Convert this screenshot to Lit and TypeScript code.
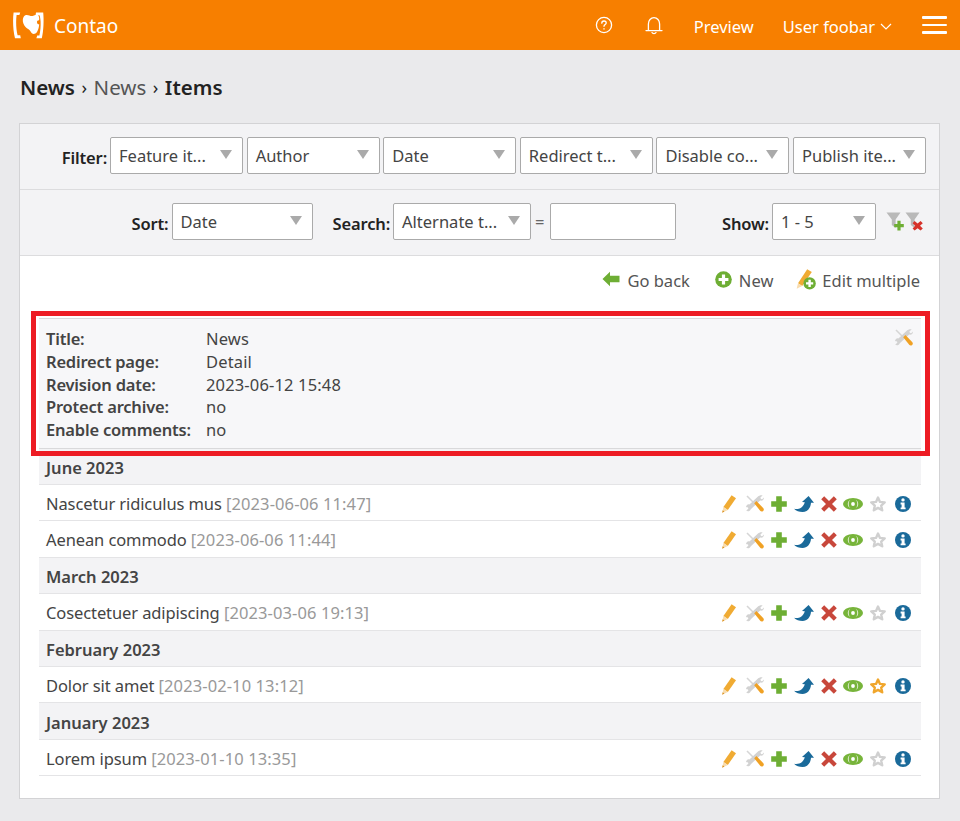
import { LitElement, html, css, svg } from 'lit';
import { customElement } from 'lit/decorators.js';

const ico = (w: number, h: number, body: unknown) =>
  html`<svg class="ico" width=${w} height=${h} viewBox="0 0 ${w} ${h}">${body}</svg>`;

const pencil = () => ico(14, 18, svg`
  <path d="M9.6 0.2 L14 3.2 L5.8 15 L1.4 12 Z" fill="#f0ab33"/>
  <path d="M1.4 12 L5.8 15 L0.2 17.8 Z" fill="#f8dcae"/>
  <path d="M0.7 15.2 L2.4 16.6 L0.2 17.8 Z" fill="#d98f1c"/>`);

const tools = () => ico(18, 17, svg`
  <path d="M1 1 L9 9" stroke="#d6d6d6" stroke-width="1.6" fill="none"/>
  <path d="M16.6 0.4 L14.4 2.6 L15 4 L16.2 4.2 L17.9 2.4 C18.1 4.6 16.4 6.2 14.2 5.6 L4.8 14.2 C4.2 16 2.2 16.8 0.2 15.8 L2.4 13.6 L2 12.4 L0.6 12 L0 12.4 C0 10.4 1.6 8.8 3.4 9.4 L12 1.6 C13 0.4 15 -0.2 16.6 0.4 Z" fill="#d2d2d2"/>
  <path d="M8.2 8.2 L10.4 6 L17.4 13.2 C18.1 14.4 17.8 15.6 16.9 16.2 C15.9 16.8 14.9 16.6 14.2 15.8 Z" fill="#f0a124"/>`);

const plus = () => ico(16, 16, svg`
  <path d="M5.2 0.2 H10.8 V5.2 H15.8 V10.8 H10.8 V15.8 H5.2 V10.8 H0.2 V5.2 H5.2 Z" fill="#6eae34"/>`);

const share = () => ico(20, 16, svg`
  <path d="M0 12.8 C5 13.6 9 11.8 10.8 6.2 L8 6 L14.6 0 L20 6.8 L17 6.8 C16.6 12.4 13.2 16 8.6 16 C5.2 16 2.2 15 0 12.8 Z" fill="#1a6a9a"/>`);

const del = () => ico(16, 16, svg`
  <path d="M3.2 0.2 L8 5 L12.8 0.2 L15.8 3.2 L11 8 L15.8 12.8 L12.8 15.8 L8 11 L3.2 15.8 L0.2 12.8 L5 8 L0.2 3.2 Z" fill="#c8473b"/>`);

const eye = () => ico(20, 12, svg`
  <ellipse cx="10" cy="6" rx="10" ry="6" fill="#77b43a"/>
  <path d="M4.8 6 C4.8 3.8 6.2 2.4 7.6 1.8 C6 2.8 5.6 4.4 5.6 6 C5.6 7.6 6 9.2 7.6 10.2 C6.2 9.6 4.8 8.2 4.8 6 Z M15.2 6 C15.2 3.8 13.8 2.4 12.4 1.8 C14 2.8 14.4 4.4 14.4 6 C14.4 7.6 14 9.2 12.4 10.2 C13.8 9.6 15.2 8.2 15.2 6 Z" fill="#fff"/>
  <circle cx="10" cy="6" r="1.9" fill="#fff"/>`);

const star = (color: string) => ico(16, 16, svg`
  <path d="M8 1.6 L10 5.9 L14.7 6.4 L11.2 9.6 L12.2 14.3 L8 11.9 L3.8 14.3 L4.8 9.6 L1.3 6.4 L6 5.9 Z" fill="#fff" stroke=${color} stroke-width="2.4" stroke-linejoin="round"/>`);

const info = () => ico(16, 16, svg`
  <circle cx="8" cy="8" r="8" fill="#1a6a9a"/>
  <circle cx="8" cy="3.9" r="1.7" fill="#fff"/>
  <path d="M5.6 6.6 H9.6 V11.4 H10.6 V13.2 H5.6 V11.4 H6.6 V8.4 H5.6 Z" fill="#fff"/>`);

const back = () => ico(18, 16, svg`
  <path d="M0.5 8 L8 0.8 V4.8 H17.5 V11.2 H8 V15.2 Z" fill="#6eae34"/>`);

const newIcon = () => ico(17, 17, svg`
  <circle cx="8.5" cy="8.5" r="8.3" fill="#6eae34"/>
  <path d="M6.9 3.6 H10.1 V6.9 H13.4 V10.1 H10.1 V13.4 H6.9 V10.1 H3.6 V6.9 H6.9 Z" fill="#fff"/>`);

const editAll = () => ico(20, 21, svg`
  <path d="M11.2 0.2 L15.8 3 L6.2 17 L2 14.2 Z" fill="#f0ab33"/>
  <path d="M2 14.2 L6.2 17 L0.6 19.8 Z" fill="#f8dcae"/>
  <circle cx="13.6" cy="14.4" r="6.2" fill="#6eae34"/>
  <path d="M12.4 10.8 H14.8 V13.2 H17.2 V15.6 H14.8 V18 H12.4 V15.6 H10 V13.2 H12.4 Z" fill="#fff"/>`);

const filterNew = () => ico(19, 19, svg`
  <path d="M0.5 0.5 H14.5 L9.6 7.5 V16 L5.8 13 V7.5 Z" fill="#b9b9b9"/>
  <path d="M11.4 8.8 H14.6 V12 H17.8 V15.2 H14.6 V18.4 H11.4 V15.2 H8.2 V12 H11.4 Z" fill="#6eae34"/>`);

const filterDel = () => ico(19, 19, svg`
  <path d="M0.5 0.5 H14.5 L9.6 7.5 V16 L5.8 13 V7.5 Z" fill="#b9b9b9"/>
  <path d="M9.6 9 L12.6 11.4 L15.6 9 L17.8 11.2 L15 13.8 L17.8 16.4 L15.6 18.6 L12.6 16.2 L9.6 18.6 L7.6 16.4 L10.2 13.8 L7.6 11.2 Z" fill="#d6322a"/>`);

const logo = () => html`<svg class="ico" width="31" height="27" viewBox="0 0 31 27" fill="#fff">
  <path d="M0.6 0.4 H7.2 L6.4 3 H3.6 C2.8 8.6 3 17.8 4.6 23.2 H7.2 L7.8 26.2 H2 C0 19 -0.4 7.6 0.6 0.4 Z"/>
  <path d="M23 0.4 H30.2 C31 8 30.6 18.6 28.8 26.2 H23.4 L24.2 23.4 H26.4 C27.4 19 27.8 14 27.6 9.6 C27.4 6.6 27 4.4 26.4 3.2 H22.6 Z"/>
  <path d="M13 3 C15.4 2.6 17.4 4.4 19.6 4 C21.6 3.6 23 2.6 24.8 2.6 C26.2 4.4 26.6 7 26 8.4 C24.8 8.2 24 9 24 10.2 C24 11.6 25 12.4 26.2 12.2 C26 15.6 24.6 20.4 22.4 21.6 C20.2 22.6 18.6 21.6 17.6 19.6 C16.6 17.4 14.6 16.8 13 15.4 C10.8 13.4 9.6 10.6 9.8 7.8 C10 5 11.4 3.4 13 3 Z"/>
</svg>`;

const help = () => html`<svg class="ico" width="18" height="18" viewBox="0 0 18 18" fill="none" stroke="#fff" stroke-width="1.3" stroke-linecap="round">
  <circle cx="9" cy="9" r="7.6"/>
  <path d="M6.8 7.2 C6.8 5.8 7.8 5 9 5 C10.3 5 11.2 5.9 11.2 7 C11.2 8.5 9 8.7 9 10.3"/>
  <path d="M9 12.7 V13"/>
</svg>`;

const bell = () => html`<svg class="ico" width="18" height="19" viewBox="0 0 18 19" fill="none" stroke="#fff" stroke-width="1.3" stroke-linecap="round">
  <path d="M1 14.6 H17"/>
  <path d="M3.4 14.4 V8 C3.4 4.4 5.8 1.6 9 1.6 C12.2 1.6 14.6 4.4 14.6 8 V14.4"/>
  <path d="M7 16.6 C7.6 18 10.4 18 11 16.6"/>
</svg>`;

const chevron = () => html`<svg class="ico" width="12" height="7" viewBox="0 0 12 7" fill="none" stroke="#fff" stroke-width="1.2"><path d="M1 1 L6 6 L11 1"/></svg>`;

const filters = ['Feature it...', 'Author', 'Date', 'Redirect t...', 'Disable co...', 'Publish ite...'];

const groups = [
  { title: 'June 2023', rows: [
    { name: 'Nascetur ridiculus mus', date: '2023-06-06 11:47', featured: false },
    { name: 'Aenean commodo', date: '2023-06-06 11:44', featured: false },
  ] },
  { title: 'March 2023', rows: [{ name: 'Cosectetuer adipiscing', date: '2023-03-06 19:13', featured: false }] },
  { title: 'February 2023', rows: [{ name: 'Dolor sit amet', date: '2023-02-10 13:12', featured: true }] },
  { title: 'January 2023', rows: [{ name: 'Lorem ipsum', date: '2023-01-10 13:35', featured: false }] },
];

const archive = [
  ['Title:', 'News'],
  ['Redirect page:', 'Detail'],
  ['Revision date:', '2023-06-12 15:48'],
  ['Protect archive:', 'no'],
  ['Enable comments:', 'no'],
];

@customElement('app-root')
export class AppRoot extends LitElement {
  static styles = css`
    :host {
      display: block;
      min-height: 821px;
      background: #eaeaec;
      color: #444;
      font-family: "Noto Sans", "Open Sans", sans-serif;
      font-size: 16.5px;
    }
    .ico { display: block; flex: none; }

    header {
      height: 50px;
      background: #f77f00;
      color: #fff;
      display: flex;
      align-items: center;
      padding: 0 13px 0 13px;
    }
    .brand { display: flex; align-items: center; gap: 10px; font-size: 19px; flex: 1; }
    .brand span, .txt { padding-top: 2px; }
    nav { display: flex; align-items: center; font-size: 16.5px; }
    .help { margin-right: 32px; }
    .bell { margin-right: 31px; }
    .user { display: flex; align-items: center; gap: 5px; margin: 0 30px 0 29px; }
    .burger { width: 25px; display: grid; gap: 5px; }
    .burger i { display: block; height: 2.5px; background: #fff; border-radius: 1px; }

    h1 {
      margin: 0;
      height: 73px;
      padding-left: 20px;
      display: flex;
      align-items: center;
      gap: 6.5px;
      font-size: 20.5px;
      font-weight: 600;
      color: #222;
    }
    h1 .sep { font-weight: 400; font-size: 18px; }
    h1 .mid { font-weight: 400; color: #555; }

    .panel {
      margin: 0 20px 0 19px;
      height: 676px;
      box-sizing: border-box;
      background: #fff;
      border: 1px solid #d3d3d5;
    }
    .bar {
      height: 66px;
      box-sizing: border-box;
      background: #f3f3f5;
      border-bottom: 1px solid #dcdcde;
      display: flex;
      align-items: center;
      justify-content: flex-end;
      padding: 0 15px 2px 0;
      color: #222;
    }
    .bar label { font-weight: 600; margin-right: 3px; padding-top: 3px; letter-spacing: -0.15px; }
    .filter { padding-right: 13px; }
    .filter .sel { width: 133px; margin-right: 3.6px; }
    .filter .sel:last-child { margin-right: 0; }
    .sel {
      height: 37px;
      box-sizing: border-box;
      background: #fff;
      border: 1px solid #aaa;
      border-radius: 2px;
      display: flex;
      align-items: center;
      justify-content: space-between;
      padding: 0 10px 0 8px;
      color: #444;
      flex: none;
    }
    .sel::after {
      content: "";
      margin-top: -3px;
      border: 6px solid transparent;
      border-top: 9px solid #aaa;
      border-bottom: 0;
    }
    .sort { width: 141px; margin-right: 20px; }
    .search { width: 138px; }
    .eq { margin: 0 4px; width: 11px; color: #666; }
    .input {
      width: 126px;
      height: 37px;
      box-sizing: border-box;
      background: #fff;
      border: 1px solid #aaa;
      border-radius: 2px;
      margin-right: 46px;
    }
    .show { width: 104px; margin-right: 10px; }
    .flt { display: flex; }

    .actions {
      height: 55px;
      box-sizing: border-box;
      display: flex;
      align-items: center;
      justify-content: flex-end;
      padding: 0 19px 6px 0;
      gap: 23px;
      color: #555;
    }
    .actions span { display: flex; align-items: center; gap: 7px; }
    .actions span:first-child { margin-right: 2px; }
    .actions span:last-child { gap: 6px; }
    .actions svg { margin-top: -3px; }

    .content { margin: 0 18px 0 19px; }
    .archive {
      position: relative;
      box-sizing: border-box;
      height: 131px;
      margin-top: 7px;
      padding: 9px 7px 0;
      background: #f7f7f9;
      border-top: 1px solid #d9d9db;
      border-bottom: 1px solid #d9d9db;
      display: grid;
      grid-template-columns: 160px 1fr;
      grid-auto-rows: 22.8px;
      line-height: 22.8px;
    }
    .archive b { font-weight: 600; color: #444; letter-spacing: -0.2px; }
    .archive span { letter-spacing: 0.15px; }
    .archive .tool { position: absolute; right: 8px; top: 10px; }
    .mark {
      position: absolute;
      inset: -8px -9px -8px -8px;
      border: 5px solid #ed1c24;
      pointer-events: none;
    }

    .group {
      box-sizing: border-box;
      height: 36.4px;
      padding: 2px 7px 0;
      background: #f3f3f5;
      border-bottom: 1px solid #e4e4e6;
      display: flex;
      align-items: center;
      font-weight: 600;
      color: #444;
    }
    .group.first { height: 36px; }
    .row {
      box-sizing: border-box;
      height: 36.4px;
      padding: 1.5px 0 0 7px;
      border-bottom: 1px solid #e4e4e6;
      display: flex;
      align-items: center;
      justify-content: space-between;
    }
    .row .name { letter-spacing: -0.1px; }
    .row em { font-style: normal; color: #999; letter-spacing: 0.1px; }
    .ops {
      display: grid;
      grid-template-columns: 23.5px 25.5px 23px 27px 22px 27px 25px 26px;
      justify-items: start;
      align-items: center;
      margin-top: 1px;
    }
  `;

  render() {
    return html`
      <header>
        <div class="brand">${logo()}<span>Contao</span></div>
        <nav>
          <span class="help">${help()}</span>
          <span class="bell">${bell()}</span>
          <span class="txt">Preview</span>
          <span class="user txt">User foobar ${chevron()}</span>
          <span class="burger"><i></i><i></i><i></i></span>
        </nav>
      </header>
      <h1>
        <span>News</span><span class="sep">›</span><span class="mid">News</span><span class="sep">›</span><span>Items</span>
      </h1>
      <div class="panel">
        <div class="bar filter">
          <label>Filter:</label>
          ${filters.map((f) => html`<div class="sel">${f}</div>`)}
        </div>
        <div class="bar">
          <label>Sort:</label>
          <div class="sel sort">Date</div>
          <label>Search:</label>
          <div class="sel search">Alternate t...</div>
          <span class="eq">=</span>
          <div class="input"></div>
          <label>Show:</label>
          <div class="sel show">1 - 5</div>
          <div class="flt">${filterNew()}${filterDel()}</div>
        </div>
        <div class="actions">
          <span>${back()}Go back</span>
          <span>${newIcon()}New</span>
          <span>${editAll()}Edit multiple</span>
        </div>
        <div class="content">
          <div class="archive">
            ${archive.map(([k, v]) => html`<b>${k}</b><span>${v}</span>`)}
            <div class="tool">${tools()}</div>
            <div class="mark"></div>
          </div>
          ${groups.map((g, i) => html`
            <div class="group ${i === 0 ? 'first' : ''}">${g.title}</div>
            ${g.rows.map((r) => html`
              <div class="row">
                <span class="name">${r.name} <em>[${r.date}]</em></span>
                <div class="ops">
                  ${pencil()}${tools()}${plus()}${share()}${del()}${eye()}${star(r.featured ? '#f0a62c' : '#d0d0d0')}${info()}
                </div>
              </div>
            `)}
          `)}
        </div>
      </div>
    `;
  }
}
